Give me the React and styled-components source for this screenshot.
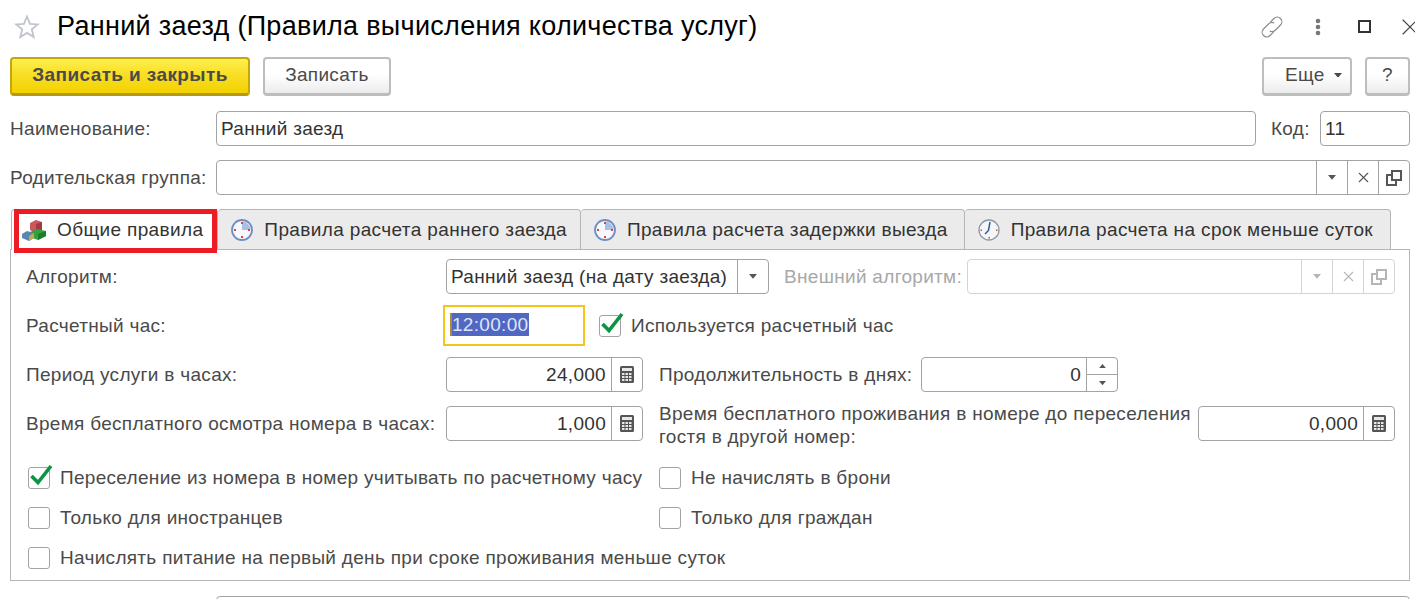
import React from "react";
import styled, { createGlobalStyle } from "styled-components";
import { X } from "lucide-react";

const GlobalStyle = createGlobalStyle`
  html, body {
    margin: 0;
    height: 599px;
    overflow: hidden;
    background: #fff;
  }
  * { box-sizing: border-box; }
`;

const Page = styled.div`
  width: 1415px;
  height: 599px;
  overflow: hidden;
  padding: 0 5px 0 10px;
  font-family: "Liberation Sans", Arial, sans-serif;
  font-size: 19px;
  letter-spacing: 0.3px;
  color: #4a4a4a;
`;

/* header */
const TitleBar = styled.div`
  height: 53px;
  display: flex;
  align-items: center;
  margin-right: -5px;
`;
const Title = styled.h1`
  margin: 0 0 0 17px;
  font-size: 27px;
  font-weight: 400;
  color: #000;
  flex: 1;
`;
const WindowTools = styled.div`
  display: flex;
  align-items: center;
  margin-right: -18px;
  color: #666;
`;
const WindowTool = styled.span`
  display: flex;
  justify-content: center;
  align-items: center;
  width: 46px;
`;

const Toolbar = styled.div`
  margin-top: 4px;
  height: 39px;
  display: flex;
  gap: 13px;
`;
const Spacer = styled.div`
  flex: 1;
`;
const Button = styled.button`
  width: ${(p) => p.$w}px;
  height: 39px;
  padding: 0 0 2px;
  font: inherit;
  letter-spacing: inherit;
  color: #4a4a4a;
  border: 2px solid #bdbdbd;
  border-bottom-width: 3px;
  border-radius: 4px;
  background: linear-gradient(#fff 45%, #ececec);
`;
const PrimaryButton = styled(Button)`
  font-weight: 700;
  letter-spacing: 0.4px;
  border-color: #c4a70a;
  border-bottom-color: #b59a0c;
  background: linear-gradient(#fff04d, #f8de26 45%, #f3d200);
`;
const MoreButton = styled(Button)`
  padding-left: 21px;
  display: flex;
  align-items: center;
  gap: 9px;
`;

/* form fields */
const FormRow = styled.div`
  margin-top: ${(p) => p.$top}px;
  height: 35px;
  display: flex;
  align-items: center;
`;
const Label = styled.span`
  flex: ${(p) => (p.$w ? `0 0 ${p.$w}px` : "none")};
  padding-left: ${(p) => p.$left || 0}px;
  white-space: nowrap;
  line-height: 23px;
  color: ${(p) => (p.$disabled ? "#a8a8a8" : "#4a4a4a")};
`;
const TwoLines = styled.div`
  flex: 0 0 555px;
  padding: 2px 0 0 16px;
  line-height: 23px;
  white-space: nowrap;
`;
const Field = styled.div`
  flex: ${(p) => (p.$w ? `0 0 ${p.$w}px` : "1")};
  height: 35px;
  display: flex;
  border: 1px solid ${(p) => (p.$disabled ? "#d4d4d4" : "#a3a3a3")};
  border-radius: 4px;
  background: #fff;
  overflow: hidden;
`;
const FieldValue = styled.div`
  flex: 1;
  min-width: 0;
  padding: 0 5px 0 4px;
  line-height: 33px;
  color: #333;
  text-align: ${(p) => (p.$right ? "right" : "left")};
  white-space: nowrap;
`;
const FieldCell = styled.div`
  flex: 0 0 31px;
  display: flex;
  justify-content: center;
  align-items: center;
  border-left: 1px solid ${(p) => (p.$disabled ? "#d4d4d4" : "#a3a3a3")};
  color: ${(p) => (p.$disabled ? "#b5b5b5" : "#555")};
`;
const SpinCell = styled(FieldCell)`
  flex-direction: column;
`;
const SpinPart = styled.div`
  flex: 1;
  width: 100%;
  display: flex;
  justify-content: center;
  align-items: center;
  & + & {
    border-top: 1px solid #a3a3a3;
  }
`;
const FocusField = styled.div`
  flex: 0 0 142px;
  height: 41px;
  margin-left: -3px;
  padding: 6px 5px;
  border: 2px solid #f5c518;
`;
const Selected = styled.span`
  display: inline-block;
  height: 23px;
  padding-right: 1px;
  line-height: 23px;
  color: #dfe4f5;
  background: #5068c4;
  border-left: 2px solid #b08a30;
`;

/* tabs */
const TabStrip = styled.div`
  margin-top: 14px;
  padding-left: 1px;
  height: 41px;
  display: flex;
  position: relative;
  z-index: 1;
`;
const Tab = styled.div`
  position: relative;
  height: ${(p) => (p.$active ? 41 : 40)}px;
  padding: 0 ${(p) => p.$pr}px 0 ${(p) => (p.$active ? 10 : 13)}px;
  display: flex;
  align-items: center;
  gap: 11px;
  letter-spacing: 0.37px;
  color: #333;
  background: ${(p) => (p.$active ? "#fff" : "#ebebeb")};
  border: 1px solid #b5b5b5;
  border-bottom: 0;
  border-left-width: ${(p) => (p.$first ? 1 : 0)}px;
  border-radius: 4px 4px 0 0;
  white-space: nowrap;
`;
const Highlight = styled.div`
  position: absolute;
  left: 2px;
  right: 0;
  top: -1px;
  bottom: -3px;
  border: 5px solid #ed1c24;
  pointer-events: none;
`;
const TabIcon = styled.svg`
  flex: 0 0 ${(p) => p.$size || 22}px;
  width: ${(p) => p.$size || 22}px;
  height: 22px;
`;
const Panel = styled.div`
  margin-top: -1px;
  padding: 9px 14px 5px 15px;
  border: 1px solid #b5b5b5;
`;
const PanelRow = styled.div`
  margin-top: ${(p) => p.$top}px;
  height: 35px;
  display: flex;
  align-items: center;
`;
const CheckRow = styled.div`
  margin-top: ${(p) => p.$top}px;
  height: 34px;
  display: grid;
  grid-template-columns: 633px 1fr;
`;
const Check = styled.label`
  display: flex;
  align-items: center;
  gap: 10px;
  margin-left: ${(p) => p.$left ?? 2}px;
  white-space: nowrap;
`;
const Box = styled.span`
  position: relative;
  flex: 0 0 22px;
  height: 22px;
  border: 1px solid #a3a3a3;
  border-radius: 3px;
  background: #fff;
`;
const Tick = styled.svg`
  position: absolute;
  left: 1px;
  top: -7px;
  width: 23px;
  height: 26px;
`;

const Star = () => (
  <svg width="26" height="25" viewBox="0 0 26 25" style={{ marginLeft: 4 }}>
    <path
      d="M13 2.500l3 7.300 7.800.6-6 5 1.900 7.600L13 18.900l-6.700 4.100 1.900-7.600-6-5 7.800-.6z"
      fill="#fff"
      stroke="#bfc5cc"
      strokeWidth="1.800"
    />
  </svg>
);

const LinkIcon = () => (
  <svg width="24" height="24" viewBox="0 0 26 26" fill="none" stroke="#8c8c8c" strokeWidth="1.300">
    <g transform="rotate(-45 13 13)">
      <path d="M10.500 18H5a5 5 0 0 1 0-10h8a5 5 0 0 1 4.800 3.500" />
      <path d="M15.500 8H21a5 5 0 0 1 0 10h-8a5 5 0 0 1-4.800-3.500" />
    </g>
  </svg>
);

const Dots = () => (
  <svg width="6" height="18" viewBox="0 0 6 18" fill="#777">
    <circle cx="3" cy="3" r="2.300" />
    <circle cx="3" cy="9" r="2.300" />
    <circle cx="3" cy="15" r="2.300" />
  </svg>
);

const Arrow = ({ up, size = 8 }) => (
  <svg width={size} height={size * 0.6} viewBox="0 0 10 6" fill="currentColor">
    <path d={up ? "M5 0l5 6H0z" : "M0 0h10L5 6z"} />
  </svg>
);

const OpenIcon = () => (
  <svg width="16" height="16" viewBox="0 0 16 16" fill="none" stroke="currentColor" strokeWidth="2">
    <rect x="6" y="1" width="9" height="9" />
    <path d="M6 5H1v10h9v-5" />
  </svg>
);

const Calc = () => (
  <svg width="14" height="17" viewBox="0 0 14 17">
    <rect x="0" y="0" width="14" height="17" rx="1.500" fill="#555" />
    <rect x="2" y="2" width="10" height="3" fill="#e8e8e8" />
    <g fill="#e8e8e8">
      {[7, 10, 13].map((y) =>
        [2, 5.500, 9].map((x) => <rect key={`${x}-${y}`} x={x} y={y} width="2.500" height="2" />)
      )}
    </g>
  </svg>
);

const Cubes = () => (
  <TabIcon $size={24} viewBox="0 0 24 22">
    <path d="M8 4l6-3 6 2v8l-6 3-6-3z" fill="#c9575c" />
    <path d="M14 5l6-2v8l-6 3z" fill="#a33a40" />
    <path d="M8 13l7-3 9 2v5l-8 4-8-3z" fill="#2fa33f" />
    <path d="M16 15l8-3v5l-8 4z" fill="#1d7d2c" />
    <path d="M0 15l5-3 7 2v5l-5 3-7-3z" fill="#5a86b0" />
    <path d="M7 17l5-3v5l-5 3z" fill="#c9a94a" />
  </TabIcon>
);

const PieClock = () => (
  <TabIcon viewBox="0 0 22 22">
    <circle cx="11" cy="11" r="10" fill="#f6f8fc" stroke="#6f8fc4" strokeWidth="1.800" />
    <path d="M11 11V2.500A8.500 8.500 0 0 1 19.500 11z" fill="#a9bfe3" />
    <g fill="#e8402c">
      <rect x="10" y="3" width="2" height="2" />
      <rect x="10" y="17" width="2" height="2" />
      <rect x="3" y="10" width="2" height="2" />
      <rect x="17" y="10" width="2" height="2" />
    </g>
  </TabIcon>
);

const WallClock = () => (
  <TabIcon viewBox="0 0 22 22">
    <circle cx="11" cy="11" r="10" fill="#f4f6f8" stroke="#8b99a8" strokeWidth="1.300" />
    <path d="M12 3l-1.500 8.500L7 15" fill="none" stroke="#2d5d9c" strokeWidth="1.500" />
    <g fill="#e8402c">
      <rect x="10.500" y="18" width="1.500" height="1.500" />
      <rect x="2.500" y="10.500" width="1.500" height="1.500" />
      <rect x="18" y="10.500" width="1.500" height="1.500" />
    </g>
  </TabIcon>
);

const CheckBox = ({ checked, left, children }) => (
  <Check $left={left}>
    <Box>
      {checked && (
        <Tick viewBox="0 0 23 26">
          <path d="M1.500 15L8 21.500 21 5" fill="none" stroke="#0b9444" strokeWidth="3.600" />
        </Tick>
      )}
    </Box>
    {children}
  </Check>
);

const PickerCells = ({ disabled }) => (
  <>
    <FieldCell $disabled={disabled}><Arrow /></FieldCell>
    <FieldCell $disabled={disabled}><X size={17} strokeWidth={1.500} /></FieldCell>
    <FieldCell $disabled={disabled}><OpenIcon /></FieldCell>
  </>
);

const tabs = [
  { icon: <PieClock />, text: "Правила расчета раннего заезда", pr: 13 },
  { icon: <PieClock />, text: "Правила расчета задержки выезда", pr: 16 },
  { icon: <WallClock />, text: "Правила расчета на срок меньше суток", pr: 17 },
];

export default function App() {
  return (
    <Page>
      <GlobalStyle />
      <TitleBar>
        <Star />
        <Title>Ранний заезд (Правила вычисления количества услуг)</Title>
        <WindowTools>
          <WindowTool><LinkIcon /></WindowTool>
          <WindowTool><Dots /></WindowTool>
          <WindowTool>
            <svg width="13" height="13" viewBox="0 0 13 13" fill="none" stroke="#333" strokeWidth="2">
              <rect x="1" y="1" width="11" height="11" />
            </svg>
          </WindowTool>
          <WindowTool><X size={28} strokeWidth={1} color="#444" /></WindowTool>
        </WindowTools>
      </TitleBar>

      <Toolbar>
        <PrimaryButton $w={240}>Записать и закрыть</PrimaryButton>
        <Button $w={128}>Записать</Button>
        <Spacer />
        <MoreButton $w={90}>
          Еще <Arrow />
        </MoreButton>
        <Button $w={45}>?</Button>
      </Toolbar>

      <FormRow $top={15}>
        <Label $w={206}>Наименование:</Label>
        <Field>
          <FieldValue>Ранний заезд</FieldValue>
        </Field>
        <Label $left={15} $w={64}>Код:</Label>
        <Field $w={90}>
          <FieldValue>11</FieldValue>
        </Field>
      </FormRow>

      <FormRow $top={14}>
        <Label $w={206}>Родительская группа:</Label>
        <Field>
          <FieldValue />
          <PickerCells />
        </Field>
      </FormRow>

      <TabStrip>
        <Tab $active $first $pr={14}>
          <Cubes />
          Общие правила
          <Highlight />
        </Tab>
        {tabs.map((t) => (
          <Tab key={t.text} $pr={t.pr}>
            {t.icon}
            {t.text}
          </Tab>
        ))}
      </TabStrip>

      <Panel>
        <PanelRow $top={0}>
          <Label $w={420}>Алгоритм:</Label>
          <Field $w={323}>
            <FieldValue>Ранний заезд (на дату заезда)</FieldValue>
            <FieldCell><Arrow /></FieldCell>
          </Field>
          <Label $disabled $left={15} $w={198}>Внешний алгоритм:</Label>
          <Field $disabled>
            <FieldValue />
            <PickerCells disabled />
          </Field>
        </PanelRow>

        <PanelRow $top={14}>
          <Label $w={420}>Расчетный час:</Label>
          <FocusField>
            <Selected>12:00:00</Selected>
          </FocusField>
          <CheckBox checked left={14}>Используется расчетный час</CheckBox>
        </PanelRow>

        <PanelRow $top={14}>
          <Label $w={420}>Период услуги в часах:</Label>
          <Field $w={197}>
            <FieldValue $right>24,000</FieldValue>
            <FieldCell><Calc /></FieldCell>
          </Field>
          <Label $left={16} $w={278}>Продолжительность в днях:</Label>
          <Field $w={197}>
            <FieldValue $right>0</FieldValue>
            <SpinCell>
              <SpinPart><Arrow up size={7} /></SpinPart>
              <SpinPart><Arrow size={7} /></SpinPart>
            </SpinCell>
          </Field>
        </PanelRow>

        <PanelRow $top={14}>
          <Label $w={420}>Время бесплатного осмотра номера в часах:</Label>
          <Field $w={197}>
            <FieldValue $right>1,000</FieldValue>
            <FieldCell><Calc /></FieldCell>
          </Field>
          <TwoLines>
            Время бесплатного проживания в номере до переселения
            <br />
            гостя в другой номер:
          </TwoLines>
          <Field $w={197}>
            <FieldValue $right>0,000</FieldValue>
            <FieldCell><Calc /></FieldCell>
          </Field>
        </PanelRow>

        <CheckRow $top={20}>
          <CheckBox checked>Переселение из номера в номер учитывать по расчетному часу</CheckBox>
          <CheckBox left={0}>Не начислять в брони</CheckBox>
        </CheckRow>
        <CheckRow $top={6}>
          <CheckBox>Только для иностранцев</CheckBox>
          <CheckBox left={0}>Только для граждан</CheckBox>
        </CheckRow>
        <CheckRow $top={6}>
          <CheckBox>Начислять питание на первый день при сроке проживания меньше суток</CheckBox>
        </CheckRow>
      </Panel>

      <FormRow $top={15}>
        <Label $w={206} />
        <Field />
      </FormRow>
    </Page>
  );
}
